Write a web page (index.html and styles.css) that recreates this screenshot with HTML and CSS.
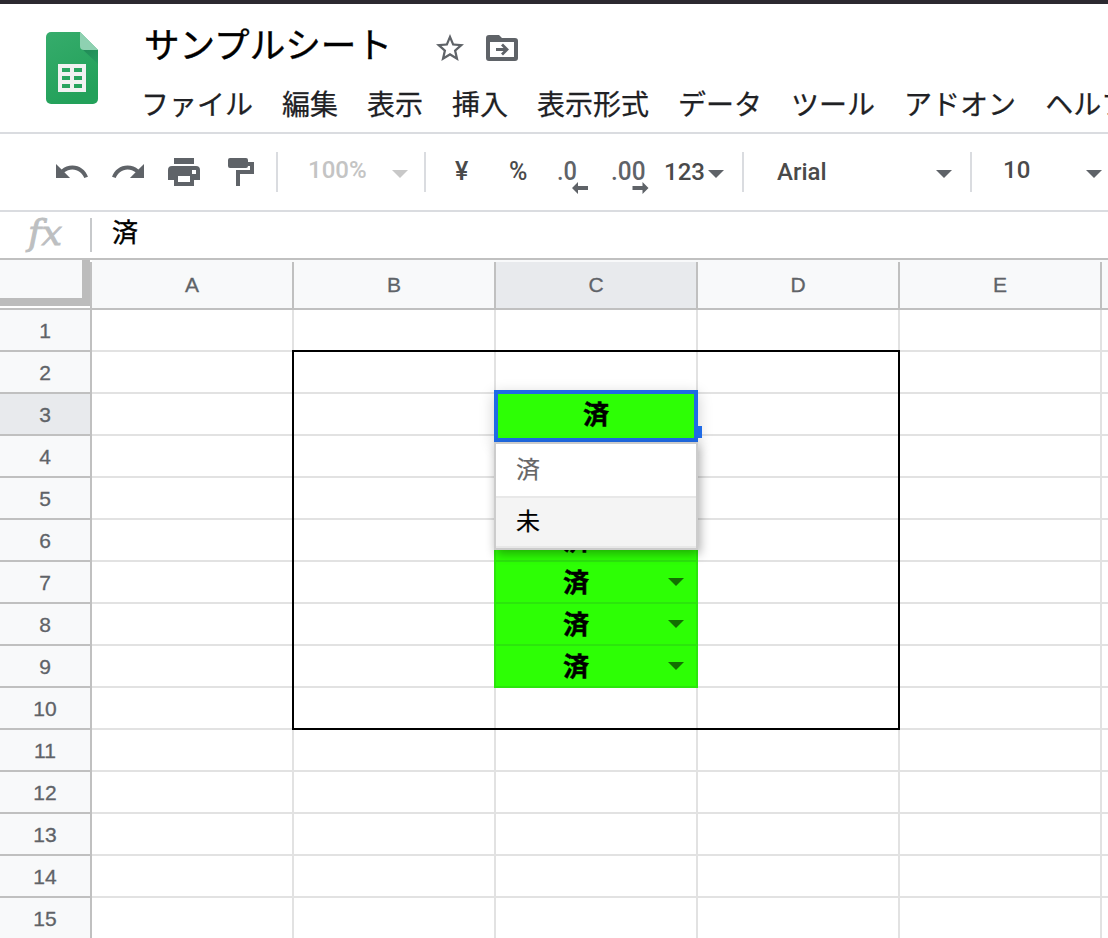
FILE: index.html
```html
<!DOCTYPE html>
<html lang="ja">
<head>
<meta charset="utf-8">
<title>サンプルシート</title>
<link rel="stylesheet" href="styles.css">
</head>
<body>
<header class="header">
  <svg class="logo" width="52" height="72" viewBox="0 0 52 72">
    <defs>
      <linearGradient id="page" x1="0" y1="0" x2=".4" y2="1"><stop offset="0" stop-color="#36ac6c"/><stop offset="1" stop-color="#23a15a"/></linearGradient>
      <linearGradient id="shade" x1="0" y1="0" x2=".8" y2="1"><stop offset="0" stop-color="#208856"/><stop offset="1" stop-color="#269c60"/></linearGradient>
    </defs>
    <path fill="url(#page)" d="M5 0h29l18 18v49a5 5 0 0 1-5 5H5a5 5 0 0 1-5-5V5a5 5 0 0 1 5-5z"/>
    <path fill="url(#shade)" d="M35.5 16.5 52 32V18z"/>
    <path fill="#8ed1b1" d="M34 0l18 18H38a4 4 0 0 1-4-4z"/>
    <path fill="#f1f1f1" fill-rule="evenodd" d="M12 32h28v28H12zM16 36v4h8v-4zM28 36v4h8v-4zM16 44v4h8v-4zM28 44v4h8v-4zM16 52v4h8v-4zM28 52v4h8v-4z"/>
  </svg>
  <div class="heading">
    <div class="title-row">
      <h1 class="title">サンプルシート</h1>
      <svg class="star" width="28" height="27" viewBox="2 2 20 19" preserveAspectRatio="none"><path fill="#5f6368" d="M22 9.24l-7.19-.62L12 2 9.19 8.63 2 9.24l5.46 4.73L5.82 21 12 17.27 18.18 21l-1.63-7.03L22 9.24zM12 15.4l-3.76 2.27 1-4.28-3.32-2.88 4.38-.38L12 6.1l1.71 4.04 4.38.38-3.32 2.88 1 4.28L12 15.4z"/></svg>
      <svg class="folder" width="32" height="26" viewBox="0 0 32 26"><path fill="#5f6368" fill-rule="evenodd" d="M3 0h10l3 3h13a3 3 0 0 1 3 3v17a3 3 0 0 1-3 3H3a3 3 0 0 1-3-3V3a3 3 0 0 1 3-3zM4 7v15h24V7z"/><path fill="none" stroke="#5f6368" stroke-width="2.8" d="M10 14.5h10M16 9.5l5 5-5 5"/></svg>
    </div>
    <nav class="menu">
      <span>ファイル</span><span>編集</span><span>表示</span><span>挿入</span><span>表示形式</span><span>データ</span><span>ツール</span><span>アドオン</span><span>ヘルプ</span>
    </nav>
  </div>
</header>

<div class="toolbar">
  <svg class="undo" width="32" height="14" viewBox="2 7 20.5 9" preserveAspectRatio="none"><path d="M12.5 8c-2.65 0-5.05.99-6.9 2.6L2 7v9h9l-3.62-3.62c1.39-1.16 3.16-1.88 5.12-1.88 3.54 0 6.55 2.31 7.6 5.5l2.37-.78C21.08 11.03 17.15 8 12.5 8z"/></svg>
  <svg class="redo" width="32" height="14" viewBox="2 7 20.5 9" preserveAspectRatio="none"><path d="M12.5 8c-2.65 0-5.05.99-6.9 2.6L2 7v9h9l-3.62-3.62c1.39-1.16 3.16-1.88 5.12-1.88 3.54 0 6.55 2.31 7.6 5.5l2.37-.78C21.08 11.03 17.15 8 12.5 8z"/></svg>
  <svg class="print" width="32" height="28" viewBox="0 0 32 28"><path fill-rule="evenodd" d="M6 0h20v6H6zM4 8h24a4 4 0 0 1 4 4v10h-6v6H6v-6H0V12a4 4 0 0 1 4-4zM10 18v6h12v-6zM24 12v4h4v-4z"/></svg>
  <svg class="paint" width="26" height="28" viewBox="0 0 26 28"><path d="M2 0h16a2 2 0 0 1 2 2v2h6v12H12v12H8V12h14V8h-2a2 2 0 0 1-2 2H2a2 2 0 0 1-2-2V2a2 2 0 0 1 2-2z"/></svg>
  <i class="sep"></i>
  <span class="zoom">100%</span><i class="caret pale"></i>
  <i class="sep"></i>
  <span class="yen">¥</span>
  <span class="percent">%</span>
  <svg class="dec-less" width="32" height="36" viewBox="0 0 32 36"><text x="-1" y="24" textLength="20" lengthAdjust="spacingAndGlyphs">.0</text><path d="M14 32l6-6v4h10v4h-10v4z"/></svg>
  <svg class="dec-more" width="38" height="36" viewBox="0 0 38 36"><text x="-2" y="24" textLength="34.5" lengthAdjust="spacingAndGlyphs">.00</text><path d="M35.500 32l-6-6v4h-10v4h10v4z"/></svg>
  <span class="formats">123</span><i class="caret"></i>
  <i class="sep"></i>
  <span class="font">Arial</span><i class="caret"></i>
  <i class="sep"></i>
  <span class="size">10</span><i class="caret"></i>
</div>

<div class="formula">
  <svg class="fx" width="42" height="42" viewBox="0 0 42 42"><text x="8" y="29" textLength="34" lengthAdjust="spacingAndGlyphs">fx</text></svg>
  <span class="value">済</span>
</div>

<main class="sheet" id="sheet">
  <div class="corner"></div>
</main>
<script src="sheet.js"></script>
</body>
</html>
```
FILE: styles.css
```css
* { box-sizing: border-box; }
body {
  margin: 0;
  width: 1108px;
  height: 938px;
  overflow: hidden;
  background: #fff;
  font-family: Roboto, "Noto Sans CJK JP", sans-serif;
}
svg, i { display: block; flex: none; }

.header {
  display: flex;
  height: 134px;
  border-top: 4px solid #2c2930;
  border-bottom: 2px solid #dadce0;
  padding-left: 46px;
}
.logo { margin-top: 28px; }
.heading { margin-left: 46px; }
.title-row { display: flex; height: 79px; }
.title {
  margin: 19px 0 0;
  width: 292px;
  font: 400 35.6px/40px "Noto Sans CJK JP", sans-serif;
  -webkit-text-stroke: .4px #000;
  color: #000;
}
.star { margin-top: 30px; }
.folder { margin: 31px 0 0 22px; }
.menu {
  display: flex;
  gap: 29px;
  margin-left: -3px;
  font: 400 28px/40px "Noto Sans CJK JP", sans-serif;
  -webkit-text-stroke: .25px #202124;
  color: #202124;
  white-space: nowrap;
}

.toolbar {
  display: flex;
  height: 78px;
  padding: 18px 0 0 56px;
  border-bottom: 2px solid #dadce0;
  font: 500 24px/40px Roboto, sans-serif;
  color: #4a4a4a;
  fill: #5f6368;
  white-space: nowrap;
}
.toolbar > * { flex: none; }
.undo { margin-top: 12px; }
.redo { margin: 12px 0 0 24px; transform: scaleX(-1); }
.print { margin: 6px 0 0 24px; }
.paint { margin: 6px 22px 0 28px; }
.sep { width: 2px; height: 40px; background: #dadce0; }
.caret {
  margin-top: 18px;
  border: 8px solid transparent;
  border-top-color: #5f6368;
  border-bottom: 0;
  height: 8px;
}
.pale { border-top-color: #c8c8c8; margin-right: 16px; }
.zoom { margin-left: 30px; width: 84px; margin-top: -2px; color: #c4c4c4; }
.yen { margin-left: 29px; width: 54px; font-size: 25px; }
.percent { width: 49px; font-size: 25px; }
.dec-less { width: 32px; overflow: visible; }
.dec-more { margin-left: 23px; overflow: visible; }
.dec-less, .dec-more { margin-top: 4px; font-size: 26px; }
.formats { margin-left: 13px; width: 44px; }
.formats + .caret { margin-right: 18px; }
.font { margin-left: 33px; width: 159px; }
.font + .caret { margin-right: 18px; }
.size { margin-left: 31px; width: 83px; margin-top: -2px; }

.formula {
  display: flex;
  height: 48px;
  border-bottom: 2px solid #c0c0c0;
}
.fx { margin: 4px 0 0 20px; fill: #bdbfc1; font: italic 36px "DejaVu Serif", serif; stroke: #bdbfc1; stroke-width: .9px; overflow: visible; }
.value {
  height: 34px;
  margin: 6px 0 0 28px;
  padding-left: 20px;
  border-left: 2px solid #c7c9cb;
  font: 400 26px/26px "Noto Sans CJK JP", sans-serif;
  -webkit-text-stroke: .4px #000;
  color: #000;
}

.sheet {
  display: grid;
  grid-template-columns: 92px repeat(6, 202px);
  grid-template-rows: 50px repeat(15, 42px);
  height: 678px;
  overflow: hidden;
  font: 21px "Liberation Sans", Arial, sans-serif;
  -webkit-text-stroke: .3px;
  color: #5f6368;
}
.corner {
  grid-area: 1 / 1;
  height: 46px;
  width: 90px;
  background: #f8f9fa;
  border-right: 8px solid #bcbcbc;
  border-bottom: 8px solid #bcbcbc;
}
.corner-rule { grid-area: 1 / 1; margin-top: 2px; border-right: 2px solid #c0c0c0; border-bottom: 2px solid #c0c0c0; }
.col-head, .row-head, .cell { display: flex; align-items: center; justify-content: center; }
.col-head {
  background: #f8f9fa;
  border: 0 solid #c0c0c0;
  border-bottom-width: 2px;
  box-shadow: inset 0 2px #f8f9fa, inset -2px 0 #c0c0c0;
  padding: 2px 2px 0 0;
}
.row-head { background: #f8f9fa; border: solid #c0c0c0; border-width: 0 2px 2px 0; padding-top: 2px; }
.current { background: #e8eaed; }
.cell { border: solid #e2e2e2; border-width: 0 2px 2px 0; }
.done {
  position: relative;
  margin-left: -2px;
  border: solid #2be60c;
  border-width: 0 2px 2px;
  background: #2dff05;
  font: 700 26px/40px "Noto Sans CJK JP", sans-serif;
  color: #000;
}
.done span { margin-left: 67px; margin-right: auto; margin-top: -3px; -webkit-text-stroke: .5px #000; }
.done .arrow {
  margin-right: 12px;
  margin-left: auto;
  border: 8px solid transparent;
  border-top-color: #127001;
  border-bottom: 0;
}
.range { border: 2px solid #000; margin: -2px 0 0 -2px; grid-area: 3 / 3 / 12 / 6; }
.selected {
  grid-area: 4 / 4;
  position: relative;
  height: 52px;
  margin: -4px 0 0 -2px;
  border: 4px solid #1f6be6;
  background: #2dff05;
  box-shadow: 0 4px 14px rgba(0, 0, 0, .2);
  font: 700 26px/37px "Noto Sans CJK JP", sans-serif;
  -webkit-text-stroke: .5px #000;
  color: #000;
  text-align: center;
}
.handle { position: absolute; left: 200px; top: 32px; width: 4px; height: 12px; background: #1f6be6; }
.options {
  position: relative;
  grid-area: 5 / 4 / 8 / 5;
  height: 108px;
  margin: 6px 0 0 -2px;
  border: 2px solid #ccc;
  background: #fff;
  box-shadow: 2px 4px 10px rgba(0, 0, 0, .33);
  font: 400 24px/48px "Noto Sans CJK JP", sans-serif;
  color: #666;
}
.option { height: 52px; padding-left: 20px; -webkit-text-stroke: .2px; }
.active { border: solid #e8e8e8; border-width: 0 0 2px; box-shadow: inset 0 2px #e8e8e8; background: #f4f4f4; color: #000; }
```
FILE: sheet.js
```js
const sheet = document.getElementById('sheet');

function add(className, row, col, html = '') {
  const el = document.createElement('div');
  el.className = className;
  if (row) el.style.gridArea = `${row} / ${col}`;
  el.innerHTML = html;
  sheet.append(el);
}

add('corner-rule');
['A', 'B', 'C', 'D', 'E', ''].forEach((name, i) => {
  add(name === 'C' ? 'col-head current' : 'col-head', 1, i + 2, name);
});
for (let r = 1; r <= 15; r++) {
  add(r === 3 ? 'row-head current' : 'row-head', r + 1, 1, String(r));
  for (let c = 2; c <= 7; c++) {
    const done = c === 4 && r >= 3 && r <= 9;
    const text = done && r >= 6 ? '<span>済</span>' : '';
    add(done ? 'cell done' : 'cell', r + 1, c, done ? text + '<i class="arrow"></i>' : '');
  }
}
add('range');
add('selected', 0, 0, '済<i class="handle"></i>');
add('options', 0, 0, '<div class="option">済</div><div class="option active">未</div>');
```
